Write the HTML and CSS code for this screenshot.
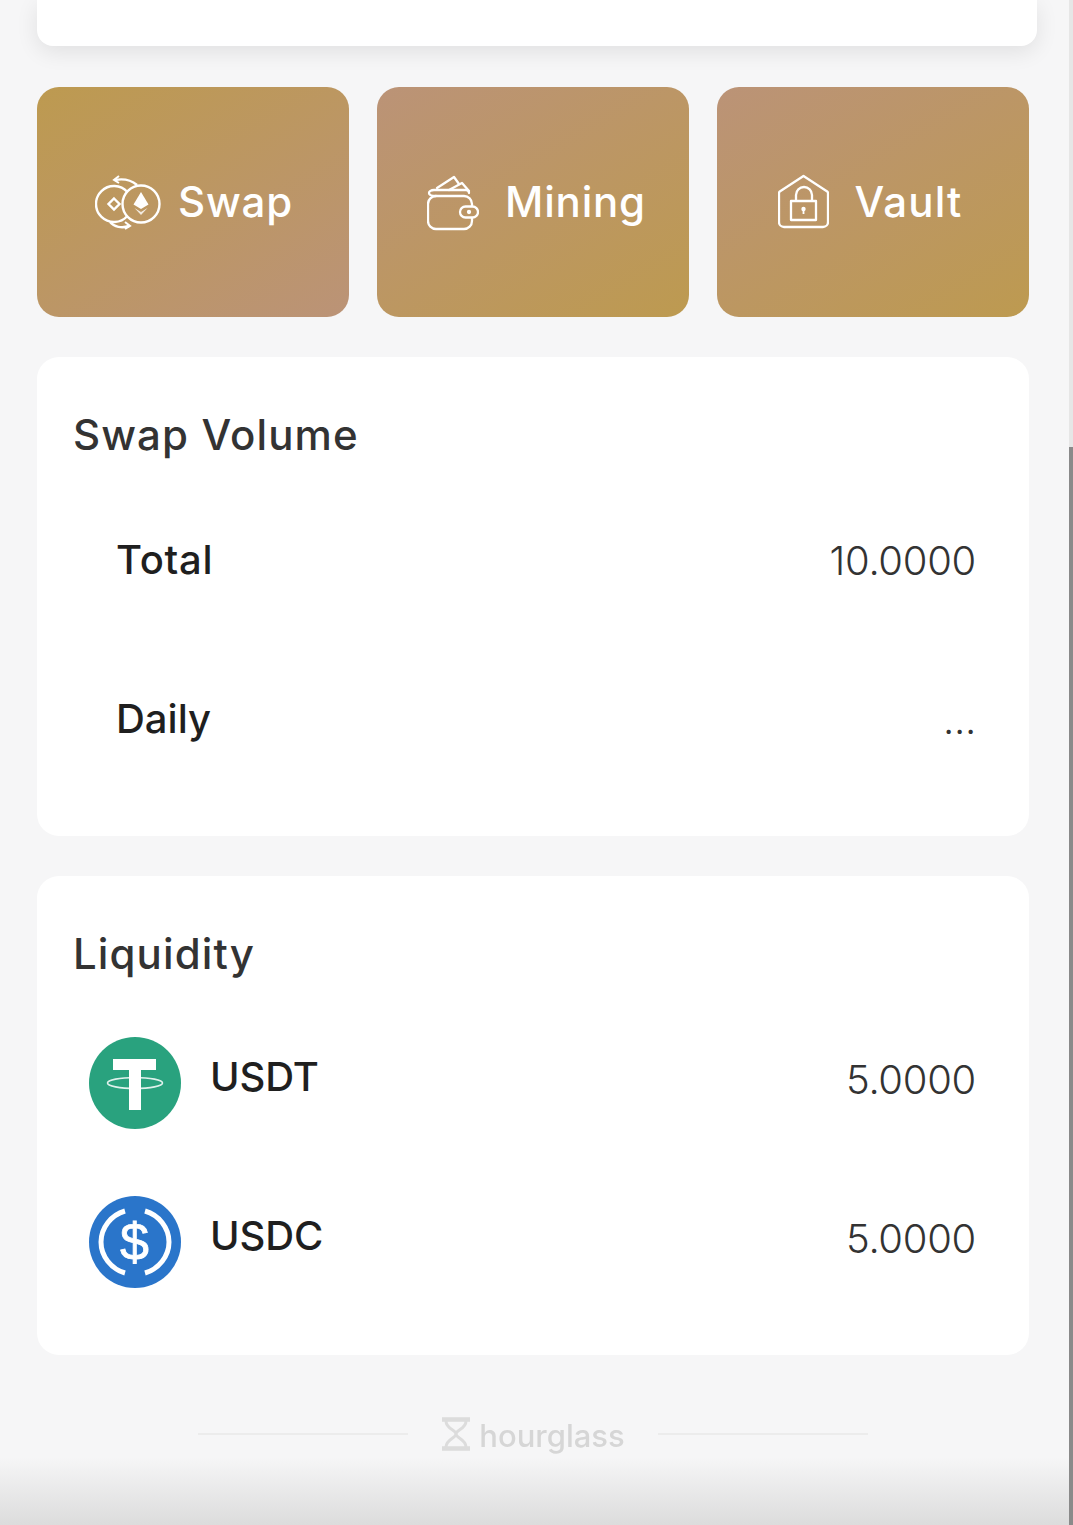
FILE: index.html
```html
<!DOCTYPE html>
<html lang="en">
<head>
<meta charset="utf-8">
<title>Hourglass</title>
<link rel="stylesheet" href="styles.css">
</head>
<body>
<div class="screen">
  <div class="top-card"></div>

  <div class="tiles">
    <a class="tile tile-swap">
      <svg class="tile-icon icon-swap" viewBox="5 0 66 65" fill="none" stroke="#fff" stroke-width="2.400">
        <path d="M37.400 22A18 18 0 1 0 37.400 46"/>
        <circle cx="51" cy="34" r="18.500"/>
        <path d="M24 28.500l5.500 5.500-5.500 5.500-5.500-5.500z"/>
        <path d="M51 22l7.500 12.500-7.500 4.500-7.500-4.500z" fill="#fff" stroke="none"/>
        <path d="M44.500 38l6.500 4 6.500-4-6.500 7z" fill="#fff" fill-opacity=".8" stroke="none"/>
        <path d="M47 15C41 10 33 8.500 25 10"/>
        <path d="M29 6l-5 4 5 3" stroke-width="2"/>
        <path d="M20 52C24 57 32 58.500 39 56"/>
        <path d="M35 52l5 4-5 3" stroke-width="2"/>
      </svg>
      <span>Swap</span>
    </a>
    <a class="tile tile-alt tile-mining">
      <svg class="tile-icon icon-wallet" viewBox="3 0 52 62" fill="none" stroke="#fff" stroke-width="2.300" stroke-linejoin="round" stroke-linecap="round">
        <path d="M48 35V33a8 8 0 0 0-8-8H12a8 8 0 0 0-8 8v17a8 8 0 0 0 8 8h28a8 8 0 0 0 8-8v-3"/>
        <path d="M12 25C7 25 5 23.500 5 22s2-3 5-3h32c2 0 3 1 3 3"/>
        <path d="M13 17L30 6l5 7"/>
        <path d="M25 19l13-7 7 8"/>
        <rect x="36" y="35.500" width="18" height="11" rx="5.500"/>
        <circle cx="45" cy="41" r="1" fill="#fff"/>
      </svg>
      <span>Mining</span>
    </a>
    <a class="tile tile-alt tile-vault">
      <svg class="tile-icon icon-vault" viewBox="4 0 51 60" fill="none" stroke="#fff" stroke-width="2.300" stroke-linejoin="round">
        <path d="M29.500 4L5.800 19.500a2 2 0 0 0-.8 1.500V50a5 5 0 0 0 5 5h39a5 5 0 0 0 5-5V21a2 2 0 0 0-.8-1.500z"/>
        <rect x="17" y="29" width="25" height="19"/>
        <path d="M22 29v-6a8 8 0 0 1 16 0v6"/>
        <circle cx="29.500" cy="37" r="2.200" fill="#fff" stroke="none"/>
        <path d="M29.500 37v5" stroke-width="1.800"/>
      </svg>
      <span>Vault</span>
    </a>
  </div>

  <section class="card">
    <h2 class="card-title">Swap Volume</h2>
    <div class="row">
      <span class="row-label plain total">Total</span>
      <span class="row-value">10.0000</span>
    </div>
    <div class="row">
      <span class="row-label plain">Daily</span>
      <span class="row-value">...</span>
    </div>
  </section>

  <section class="card">
    <h2 class="card-title">Liquidity</h2>
    <div class="row">
      <div class="token">
        <svg class="token-icon" viewBox="0 0 92 92">
          <circle cx="46" cy="46" r="46" fill="#29a27e"/>
          <path d="M24 22h43v11H52v9h-12v-9H24zM40 50h12v23H40z" fill="#fff"/>
          <ellipse cx="46" cy="46" rx="27.500" ry="5.500" fill="none" stroke="#fff" stroke-width="1.600" opacity=".85"/>
          <rect x="40" y="40" width="12" height="12" fill="#fff"/>
        </svg>
        <span class="row-label">USDT</span>
      </div>
      <span class="row-value">5.0000</span>
    </div>
    <div class="row">
      <div class="token">
        <svg class="token-icon" viewBox="0 0 92 92">
          <circle cx="46" cy="46" r="46" fill="#2a75ca"/>
          <path d="M36 15C22 19 12 32 12 46s10 27 24 31M56 15C70 19 80 32 80 46s-10 27-24 31" fill="none" stroke="#fff" stroke-width="5"/>
          <text class="usdc-sign" x="45.500" y="64" text-anchor="middle">$</text>
        </svg>
        <span class="row-label">USDC</span>
      </div>
      <span class="row-value">5.0000</span>
    </div>
  </section>

  <footer class="brand">
    <span class="brand-line"></span>
    <div class="brand-logo">
      <svg class="brand-icon" viewBox="0 0 30 34" fill="none" stroke="#dcdcdc">
        <path d="M1 2.500h28M1 31.500h28" stroke-width="4.500"/>
        <path d="M5 4c0 8 10 9 10 13S5 22 5 30M25 4c0 8-10 9-10 13s10 5 10 13" stroke-width="3"/>
      </svg>
      <span class="brand-name">hourglass</span>
    </div>
    <span class="brand-line"></span>
  </footer>

  <div class="bottom-shade"></div>
  <div class="scrollbar"><div class="scrollbar-thumb"></div></div>
</div>
</body>
</html>
```
FILE: styles.css
```css
* { box-sizing: border-box; }
html, body { margin: 0; padding: 0; }
body {
  background: #f6f6f7;
  font-family: Inter, "Noto Sans", "Liberation Sans", sans-serif;
  color: #333;
}
.screen {
  position: relative;
  width: 1073px;
  height: 1525px;
  overflow: hidden;
  padding-left: 37px;
  background: #f6f6f7;
}
.top-card {
  width: 1000px;
  height: 46px;
  background: #fff;
  border-radius: 0 0 16px 16px;
  box-shadow: 0 6px 22px rgba(0, 0, 0, .09);
}
.tiles {
  display: flex;
  gap: 28px;
  margin-top: 41px;
}
.tile {
  width: 312px;
  height: 230px;
  border-radius: 22px;
  display: flex;
  align-items: center;
  justify-content: center;
  gap: 17px;
  color: #fff;
  font-size: 42px;
  font-weight: 500;
  letter-spacing: .8px;
}
.tile span { margin-top: -2px; }
.tile-swap { background: linear-gradient(150deg, #bd9a50 0%, #bb9377 100%); padding-left: 2px; }
.tile-alt { background: linear-gradient(150deg, #bb9377 0%, #bd9a50 100%); }
.tile-mining { gap: 26px; padding-left: 7px; }
.tile-vault { gap: 25px; padding-right: 5px; }
.tile-vault span { letter-spacing: 1.200px; }
.tile-icon { display: block; flex: none; }
.icon-swap { width: 66px; height: 65px; }
.icon-wallet { width: 52px; height: 62px; }
.icon-vault { width: 51px; height: 60px; }
.card {
  width: 992px;
  height: 479px;
  margin-top: 40px;
  padding: 48px 53px 0 37px;
  background: #fff;
  border-radius: 22px;
}
.card-title {
  margin: 0 0 16px -1px;
  height: 60px;
  line-height: 60px;
  font-size: 42px;
  font-weight: 500;
  letter-spacing: 1.100px;
  color: #333;
}
.row {
  height: 159px;
  display: flex;
  align-items: center;
  justify-content: space-between;
}
.row-label {
  font-size: 40px;
  font-weight: 500;
  color: #1f1f1f;
  line-height: 48px;
  margin-top: -2px;
}
.row-label.plain { padding-left: 42px; }
.row-label.total { letter-spacing: .7px; }
.row-value {
  font-size: 40px;
  font-weight: 300;
  color: #333;
  letter-spacing: -.3px;
  line-height: 48px;
}
.token {
  display: flex;
  align-items: center;
  gap: 29px;
  padding-left: 15px;
}
.token .row-label { margin: 0 0 6px; letter-spacing: -.1px; }
.token-icon {
  display: block;
  width: 92px;
  height: 92px;
  margin-top: 7px;
}
.usdc-sign {
  font-family: "Liberation Sans", sans-serif;
  font-size: 52px;
  font-weight: 400;
  letter-spacing: 0;
  fill: #fff;
  stroke: #fff;
  stroke-width: .8px;
}
.brand {
  display: flex;
  align-items: center;
  justify-content: center;
  gap: 33px;
  width: 992px;
  margin-top: 61px;
  height: 36px;
}
.brand-line {
  width: 210px;
  height: 2px;
  background: #ececec;
}
.brand-logo {
  display: flex;
  align-items: center;
  gap: 8px;
  color: #d6d6d6;
  font-size: 31px;
  font-weight: 500;
  filter: blur(.5px);
}
.brand-name { margin-top: 3px; }
.brand-icon {
  display: block;
  width: 30px;
  height: 34px;
}
.bottom-shade {
  position: absolute;
  left: 0;
  right: 0;
  bottom: 0;
  height: 68px;
  background: linear-gradient(to bottom, rgba(215, 215, 215, 0), #dcdcdc);
}
.scrollbar {
  position: absolute;
  top: 0;
  right: 0;
  width: 4px;
  height: 100%;
  background: #e6e6e6;
}
.scrollbar-thumb {
  margin-top: 447px;
  height: 1078px;
  background: #8a8a8a;
}
```
